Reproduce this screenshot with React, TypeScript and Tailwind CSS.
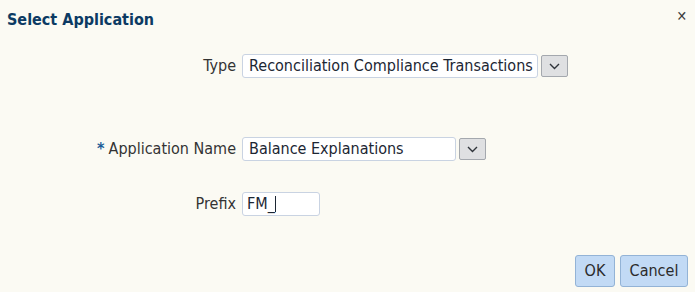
function Chevron() {
  return (
    <svg width="11" height="7" viewBox="0 0 11 7" fill="none">
      <path d="M1 1l4.5 4.5L10 1" stroke="#2f343a" strokeWidth="1.4" />
    </svg>
  );
}

function Choice({ value, width }: { value: string; width: number }) {
  return (
    <div className="flex items-center gap-[3px]">
      <div
        className="h-[24px] flex items-center pl-[6px] bg-white border border-[#c9d3e2] rounded-[3px] text-[#1c2633] text-[16px] leading-none"
        style={{ width }}
      >
        {value}
      </div>
      <button className="h-[22px] w-[27px] flex items-center justify-center bg-[#dfe0e2] border border-[#a4a8ae] rounded-[2px]">
        <Chevron />
      </button>
    </div>
  );
}

export default function App() {
  return (
    <div
      className="w-[695px] h-[292px] bg-[#fbfaf3] relative flex flex-col text-[#333] overflow-hidden"
      style={{ fontFamily: 'Tahoma, "DejaVu Sans Condensed", "Noto Sans", sans-serif' }}
    >
      {/* header */}
      <div className="flex items-start justify-between h-[40px] pl-[7px] pr-[8px] pt-[10px]">
        <h1 className="text-[16px] font-bold text-[#0c3a63] leading-[20px]">Select Application</h1>
        <button className="mt-[-1px] text-[#3d3d3d] text-[14px] font-bold leading-none">✕</button>
      </div>

      {/* form */}
      <div className="grid grid-cols-[236px_auto] gap-x-[6px] items-center mt-[14px]">
        <span className="text-right text-[16px]">Type</span>
        <Choice value="Reconciliation Compliance Transactions" width={296} />

        <div className="h-[59px] col-span-2" />

        <span className="text-right text-[16px]">
          <span className="text-[#1b5c98] font-bold mr-[4px]">*</span>Application Name
        </span>
        <Choice value="Balance Explanations" width={214} />

        <div className="h-[31px] col-span-2" />

        <span className="text-right text-[16px]">Prefix</span>
        <div className="w-[78px] h-[24px] pl-[4px] flex items-center bg-white border border-[#c9d3e2] rounded-[3px] text-[16px] text-[#1c2633] leading-none">
          FM_
          <span className="w-px h-[16px] bg-[#1c2633]" />
        </div>
      </div>

      {/* footer */}
      <div className="mt-auto mb-[5px] mr-[7px] flex justify-end gap-[5px]">
        <button className="w-[40px] h-[32px] bg-[#c2daf5] border border-[#93b3d6] rounded-[3px] text-[16px] text-[#2b2b2b]">
          OK
        </button>
        <button className="w-[68px] h-[32px] bg-[#c2daf5] border border-[#93b3d6] rounded-[3px] text-[16px] text-[#2b2b2b]">
          Cancel
        </button>
      </div>
    </div>
  );
}
